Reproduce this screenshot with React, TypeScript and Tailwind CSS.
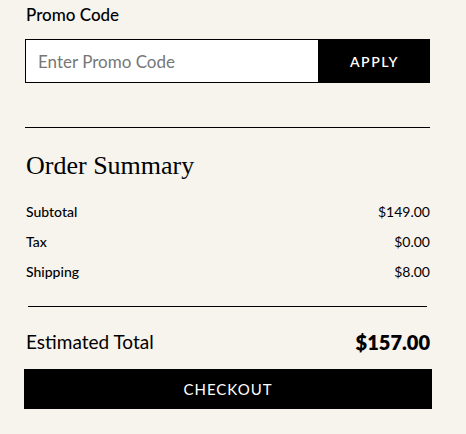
export default function App() {
  return (
    <div className="min-h-[434px] w-[466px] bg-[#f7f3ed] pt-[3px] text-black [font-family:Lato,'Noto_Sans',sans-serif]">
      <div className="ml-[25px] w-[405px]">
        <label htmlFor="promo" className="block h-[24px] pl-px text-[17px] leading-[24px] font-medium">
          Promo Code
        </label>
        <div className="mt-[12px] flex h-[44px]">
          <input
            id="promo"
            type="text"
            placeholder="Enter Promo Code"
            className="h-full w-[294px] border border-black bg-white px-[12px] text-[17px] outline-none placeholder:text-[#777]"
          />
          <button
            type="button"
            className="h-full flex-1 bg-black text-[14px] font-semibold tracking-[1.5px] text-white"
          >
            APPLY
          </button>
        </div>

        <div className="mt-[44px] border-t border-black" />

        <h2 className="mt-[22px] h-[32px] pl-px text-[26px] leading-[32px] [font-family:'Liberation_Serif',serif]">
          Order Summary
        </h2>

        <div className="mt-[20px] flex flex-col gap-[10px] text-[14px] leading-[20px]">
          <div className="flex justify-between">
            <span className="pl-px font-medium">Subtotal</span>
            <span>$149.00</span>
          </div>
          <div className="flex justify-between">
            <span className="pl-px font-medium">Tax</span>
            <span>$0.00</span>
          </div>
          <div className="flex justify-between">
            <span className="pl-px font-medium">Shipping</span>
            <span>$8.00</span>
          </div>
        </div>

        <div className="mx-[3px] mt-[24px] border-t border-black" />

        <div className="mt-[21px] flex h-[28px] items-center justify-between leading-[28px]">
          <span className="pl-px text-[19px]">Estimated Total</span>
          <span className="text-[20px] font-extrabold">$157.00</span>
        </div>

        <button
          type="button"
          className="mt-[13px] -ml-px h-[40px] w-[408px] bg-black text-[15px] tracking-[1px] text-white"
        >
          CHECKOUT
        </button>
      </div>
    </div>
  );
}
